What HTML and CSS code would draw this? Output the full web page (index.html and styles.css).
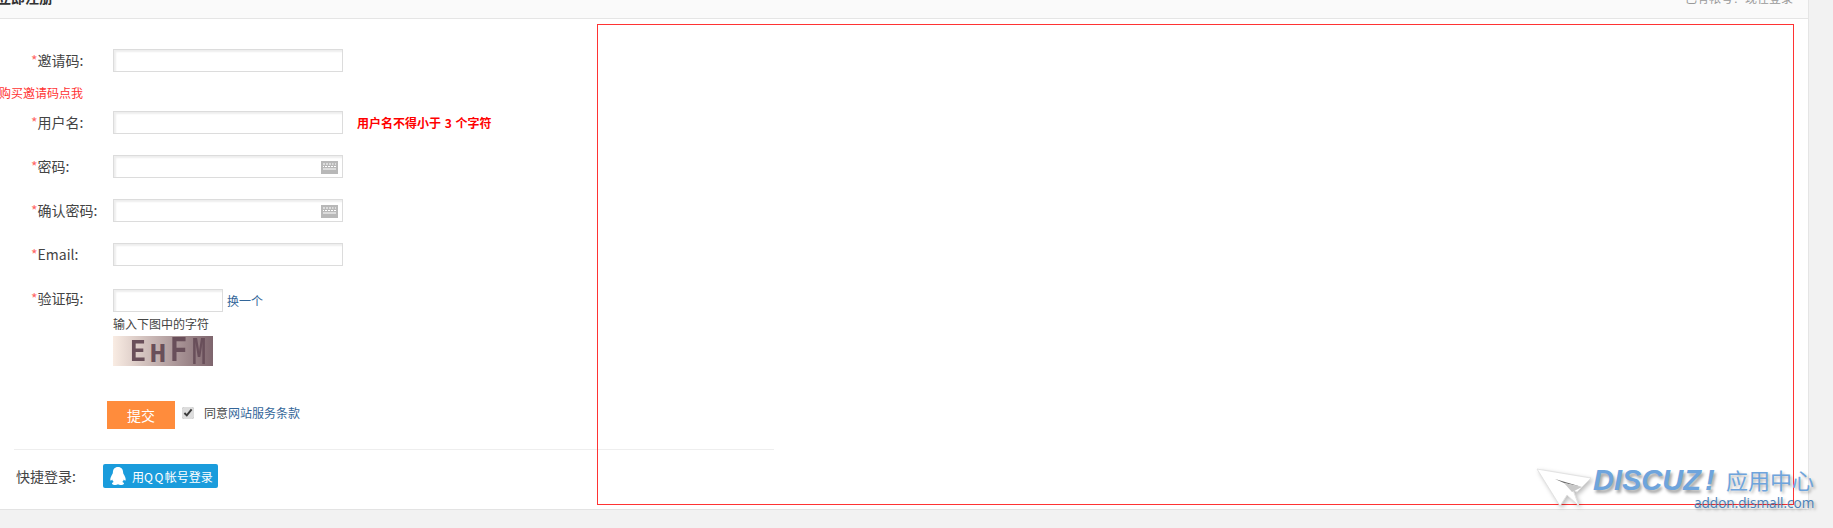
FILE: index.html
```html
<!DOCTYPE html>
<html lang="zh-CN">
<head>
    <meta charset="UTF-8">
    <meta name="viewport" content="width=device-width, initial-scale=1.0">
    <title>立即注册</title>
    <link rel="stylesheet" href="styles.css">
</head>

<body>
    <div class="card">
        <div class="card-head">
            <h3>立即注册</h3>
            <span class="has-account">已有帐号？现在登录</span>
        </div>

        <form class="reg-form">
            <div class="form-row">
                <label><em>*</em>邀请码:</label>
                <span class="field"><input type="text"></span>
            </div>
            <div class="invite-note"><a href="#">购买邀请码点我</a></div>
            <div class="form-row">
                <label><em>*</em>用户名:</label>
                <span class="field"><input type="text"></span>
                <span class="error-tip">用户名不得小于 3 个字符</span>
            </div>
            <div class="form-row">
                <label><em>*</em>密码:</label>
                <span class="field">
                    <input type="password">
                    <svg class="kbd" viewBox="0 0 17 13"><rect width="17" height="13" fill="#b8b8b8"/><path d="M2 3h2M5 3h2M8 3h2M11 3h1.500M14 3h1M2 5.500h1M4 5.500h2M7 5.500h2M10 5.500h2M13 5.500h2M2 8h13" stroke="#fff" fill="none"/></svg>
                </span>
            </div>
            <div class="form-row">
                <label><em>*</em>确认密码:</label>
                <span class="field">
                    <input type="password">
                    <svg class="kbd" viewBox="0 0 17 13"><rect width="17" height="13" fill="#b8b8b8"/><path d="M2 3h2M5 3h2M8 3h2M11 3h1.500M14 3h1M2 5.500h1M4 5.500h2M7 5.500h2M10 5.500h2M13 5.500h2M2 8h13" stroke="#fff" fill="none"/></svg>
                </span>
            </div>
            <div class="form-row">
                <label><em>*</em>Email:</label>
                <span class="field"><input type="text"></span>
            </div>
            <div class="form-row captcha-row">
                <label><em>*</em>验证码:</label>
                <div class="captcha-box">
                    <div class="captcha-top">
                        <input class="captcha-input" type="text">
                        <a href="#">换一个</a>
                    </div>
                    <p>输入下图中的字符</p>
                    <div class="captcha-img">
                        <span class="c1">E</span>
                        <span class="c2">H</span>
                        <span class="c3">F</span>
                        <span class="c4">M</span>
                    </div>
                </div>
            </div>
            <div class="submit-row">
                <button type="button">提交</button>
                <input type="checkbox" checked>
                <span class="agree">同意<a href="#">网站服务条款</a></span>
            </div>
        </form>

        <div class="quick-login">
            <span>快捷登录:</span>
            <a class="qq-btn" href="#">
                <svg viewBox="0 0 18 18"><path d="M9 0C5.600 0 4 2.500 3.900 5.200 3.800 6.500 3.300 7.200 2.700 8.300 1.700 10.200 1 12.300 1.400 13.400 1.700 14 2.700 13.300 3.200 12.400 3.500 13.500 4 14.400 4.800 15.100 3.700 15.500 2.800 16 3 16.800 3.200 17.600 5 18 6.500 18 7.500 18 8.300 17.700 9 17.300 9.700 17.700 10.500 18 11.500 18 13 18 14.800 17.600 15 16.800 15.200 16 14.300 15.500 13.200 15.100 14 14.400 14.500 13.500 14.800 12.400 15.300 13.300 16.300 14 16.600 13.400 17 12.300 16.300 10.200 15.300 8.300 14.700 7.200 14.200 6.500 14.100 5.200 14 2.500 12.400 0 9 0Z" fill="#fff"/></svg>
                <span>用<b>QQ</b>帐号登录</span>
            </a>
        </div>
    </div>

    <div class="red-box"></div>

    <div class="watermark">
        <svg class="wm-plane" viewBox="0 0 56 40"><path d="M1 1 55 10 41 24 37 22 43 38 31 27 24 38Z" fill="#fff" stroke="#e2e2e2"/><path d="M19 11 46 19 28 15Z" fill="#6b6b6b"/><path d="M28 15 46 19 36 24Z" fill="#c9c9c9"/></svg>
        <span class="wm-logo">DISCUZ<i>!</i></span>
        <span class="wm-cn">应用中心</span>
        <span class="wm-url">addon.dismall.com</span>
    </div>
</body>
</html>
```

FILE: styles.css
```css
html, body {
    margin: 0;
    height: 528px;
    overflow: hidden;
}

body {
    position: relative;
    background: #f2f2f2;
    font-family: "Noto Sans CJK SC", "Noto Sans", sans-serif;
    font-size: 14px;
    color: #444;
}

a {
    color: #369;
    text-decoration: none;
}

.card {
    margin-right: 24px;
    height: 509px;
    background: #fff;
    border-right: 1px solid #e5e5e5;
    border-bottom: 1px solid #e3e3e3;
}

.card-head {
    display: flex;
    justify-content: space-between;
    height: 18px;
    overflow: hidden;
    background: #fafafa;
    border-bottom: 1px solid #e5e5e5;
    padding-right: 15px;
}

.card-head h3 {
    margin: -13px 0 0 -3px;
    font-size: 14px;
    line-height: 20px;
    font-weight: bold;
    color: #333;
}

.has-account {
    margin-top: -12px;
    font-size: 12px;
    line-height: 20px;
    color: #999;
}

.reg-form {
    padding-top: 30px;
}

.form-row {
    display: flex;
    align-items: center;
    height: 23px;
    margin-bottom: 21px;
}

.form-row label {
    width: 82px;
    padding-left: 31px;
    white-space: nowrap;
    line-height: 23px;
}

.form-row em {
    font-style: normal;
    color: #f66;
}

.field {
    position: relative;
    display: block;
    height: 23px;
}

input[type="text"],
input[type="password"] {
    display: block;
    box-sizing: border-box;
    width: 230px;
    height: 23px;
    margin: 0;
    padding: 0 4px;
    background: #fff;
    border: 1px solid #dcdcdc;
    box-shadow: inset 2px 2px 2px #eee;
    outline: none;
}

.kbd {
    position: absolute;
    top: 6px;
    right: 5px;
    width: 17px;
    height: 13px;
}

.error-tip {
    margin-left: 14px;
    font-size: 12px;
    font-weight: bold;
    word-spacing: 1px;
    color: #f00;
}

.invite-note {
    display: flex;
    justify-content: flex-end;
    width: 83px;
    height: 18px;
    margin: -9px 0 9px;
    font-size: 12px;
    line-height: 18px;
    white-space: nowrap;
}

.invite-note a {
    color: #f33;
}

.form-row.captcha-row {
    align-items: flex-start;
    height: auto;
    margin-top: 23px;
    margin-bottom: 0;
}

.captcha-row label {
    line-height: 18px;
}

.captcha-top {
    display: flex;
    align-items: center;
    font-size: 12px;
}

input.captcha-input {
    width: 110px;
    margin-right: 4px;
}

.captcha-box p {
    margin: 3px 0 3px;
    font-size: 12px;
    line-height: 18px;
}

.captcha-img {
    display: flex;
    align-items: flex-start;
    width: 100px;
    height: 30px;
    padding-left: 15px;
    box-sizing: border-box;
    background: linear-gradient(90deg, #f9ece3, #7e656d);
    font-family: "Liberation Mono", monospace;
    font-weight: bold;
    line-height: 22px;
    color: #694f5a;
}

.captcha-img span {
    display: block;
    width: 20px;
    height: 22px;
    text-align: center;
}

.c1 { margin-top: 5.500px; font-size: 32px; transform: scaleX(0.8); }
.c2 { margin-top: 8px; font-size: 28px; }
.c3 { margin-top: 4.500px; font-size: 36px; transform: scaleX(0.8); }
.c4 { margin-top: 7px; font-size: 39px; transform: scaleX(0.6); }

.submit-row {
    display: flex;
    align-items: center;
    height: 28px;
    margin: 35px 0 0 107px;
}

.submit-row button {
    width: 68px;
    height: 28px;
    padding: 0;
    background: #ff8c3c;
    color: #fff;
    border: none;
    font-family: inherit;
    font-size: 14px;
    cursor: pointer;
}

.submit-row input {
    width: 12px;
    height: 12px;
    margin: -5px 10px 0 7px;
    accent-color: #ddd;
}

.agree {
    margin-top: -6px;
    font-size: 12px;
}

.quick-login {
    display: flex;
    align-items: center;
    width: 760px;
    height: 53px;
    margin: 20px 0 0 14px;
    border-top: 1px solid #eee;
    box-sizing: border-box;
}

.quick-login > span {
    width: 89px;
    padding-left: 2px;
    box-sizing: border-box;
}

.qq-btn {
    display: flex;
    align-items: center;
    gap: 5px;
    width: 115px;
    height: 24px;
    box-sizing: border-box;
    padding-left: 6px;
    background: #1a9cdc;
    color: #fff;
    font-size: 12px;
    border-radius: 2px;
}

.qq-btn svg {
    width: 18px;
    height: 18px;
}

.qq-btn b {
    font-weight: normal;
    letter-spacing: 1.500px;
}

.red-box {
    position: absolute;
    left: 597px;
    top: 24px;
    width: 1195px;
    height: 479px;
    border: 1px solid #f33;
}

.watermark {
    position: absolute;
    left: 1536px;
    top: 466px;
    width: 290px;
    height: 50px;
}

.wm-plane {
    position: absolute;
    left: 0;
    top: 2px;
    width: 56px;
    height: 40px;
    filter: drop-shadow(2px 2px 2px rgba(0, 0, 0, 0.25));
}

.wm-logo {
    position: absolute;
    left: 57px;
    top: 2px;
    font-family: "Liberation Sans", sans-serif;
    font-size: 29px;
    line-height: 24px;
    font-weight: bold;
    font-style: italic;
    color: #6ea4dc;
    text-shadow: 2px 3px 3px rgba(0, 0, 0, 0.35);
}

.wm-logo i {
    margin-left: 4px;
}

.wm-cn {
    position: absolute;
    left: 190px;
    top: 2px;
    font-size: 22px;
    line-height: 22px;
    color: #6ea4dc;
    text-shadow: 2px 2px 3px rgba(0, 0, 0, 0.3);
}

.wm-url {
    position: absolute;
    left: 158px;
    top: 30px;
    font-family: "Open Sans", sans-serif;
    font-size: 13.600px;
    line-height: 14px;
    color: #4a7fb8;
    text-shadow: 2px 2px 3px rgba(0, 0, 0, 0.35);
}
```
